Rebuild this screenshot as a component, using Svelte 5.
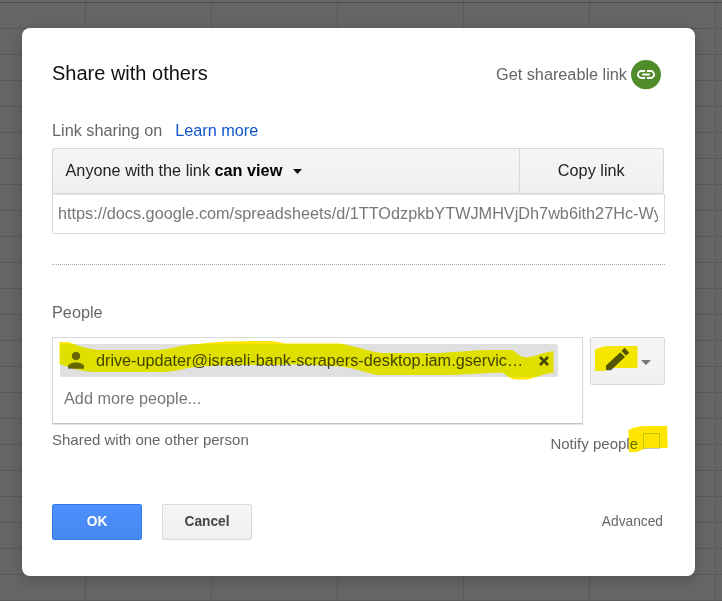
<script>
  let query = $state('');
  const url = 'https://docs.google.com/spreadsheets/d/1TTOdzpkbYTWJMHVjDh7wb6ith27Hc-Wy';
</script>

<main class="sheet">
  <section class="dialog">
    <header>
      <h1>Share with others</h1>
      <div class="getlink">
        <span>Get shareable link</span>
        <svg width="30" height="30" viewBox="0 0 30 30">
          <ellipse cx="15" cy="14.6" rx="15" ry="14.6" fill="#518c2b" />
          <path d="M14.100 11H10.400a3.500 3.500 0 0 0 0 7h3.700M15.900 11h3.700a3.500 3.500 0 0 1 0 7h-3.700M11.200 14.500h7.600" fill="none" stroke="#fff" stroke-width="1.8" />
        </svg>
      </div>
    </header>

    <div class="status"><span>Link sharing on</span><a href="#learn">Learn more</a></div>

    <div class="linkbar">
      <div class="access">
        <span>Anyone with the link <b>can view</b></span>
        <svg width="9" height="5" viewBox="0 0 9 5"><path d="M0 0h9L4.5 5z" fill="#111" /></svg>
      </div>
      <div class="copy">Copy link</div>
    </div>
    <div class="url"><span>{url}</span></div>

    <hr />

    <h2>People</h2>
    <div class="people">
      <div class="box">
        <div class="chip">
          <svg class="person" width="16" height="17" viewBox="0 0 16 17">
            <circle cx="8" cy="4.1" r="4.1" fill="#666" />
            <path d="M0 16.7v-2.2c0-2.5 4.6-4 8-4s8 1.500 8 4v2.200z" fill="#666" />
          </svg>
          <span class="mail">drive-updater@israeli-bank-scrapers-desktop.iam.gservic…</span>
          <svg class="close" width="10" height="10" viewBox="0 0 10 10"><path d="M1 1l8 8M9 1l-8 8" stroke="#444" stroke-width="2.500" /></svg>
        </div>
        <input bind:value={query} placeholder="Add more people..." />
      </div>
      <div class="edit">
        <svg width="23" height="23" viewBox="0 0 23 23" fill="#555">
          <path d="M0 17.400V22.200h5L19 8.900 14.300 4.200zM15.400 3.100l4.700 4.700 2.300-2.200c.6-.6.6-1.300 0-1.900L19.500.4c-.6-.6-1.300-.6-1.900 0z" />
        </svg>
        <svg class="arrow" width="10" height="5" viewBox="0 0 10 5"><path d="M0 0h10L5 5z" fill="#777" /></svg>
      </div>
    </div>

    <div class="notes">
      <span class="shared">Shared with one other person</span>
      <label class="notify">Notify people<i></i></label>
    </div>

    <footer>
      <button class="ok">OK</button>
      <button class="cancel">Cancel</button>
      <span class="advanced">Advanced</span>
    </footer>
  </section>

  <svg class="marker" width="722" height="601" viewBox="0 0 722 601" fill="#ffe600">
    <path d="M59.500 342H68C76 344 83 349 100 350H158C174 349 177 345 198 344C220 341 245 341 270 341Q278 341 285 343.500H340C355 346 370 352 383 353H440C458 352 474 350 490 350H512C516 351 518 357 527 357.500C537 356 545 352 553.500 351V373C543 373 537 378 527 379.500H517C507 379 507 373 500 372.500C484 373 465 375 440 375H377C366 373 350 366 332 366C315 365 295 364 275 365C245 365 215 364 188 368C175 371 170 372 160 372H93C80 371 70 368 59.500 364z" />
    <path d="M595 349.500L603 346.500Q608 346 616 346H637.500V368H616C610 368 608 370 604 371H595z" />
    <path d="M628.300 430C634 427 640 426 646 426H667.300L667.700 448H648C641 449 640 451.500 636 452H629z" />
  </svg>
</main>

<style>
  :global(body) { margin: 0; }
  .sheet {
    position: relative;
    box-sizing: border-box;
    width: 722px;
    height: 601px;
    padding: 28px 27px 0 22px;
    overflow: hidden;
    font-family: "Liberation Sans", Arial, sans-serif;
    font-size: 16.25px;
    color: #666;
    background:
      linear-gradient(#4b4b4b, #4b4b4b) 0 2px / 100% 1px no-repeat,
      repeating-linear-gradient(90deg, #5a5a5a 0 1px, transparent 1px 126px) 85px 0 / 756px 100%,
      repeating-linear-gradient(#5a5a5a 0 1px, transparent 1px 26px) 0 2px / 100% 650px,
      #666;
  }
  .dialog {
    box-sizing: border-box;
    height: 548px;
    padding: 32px 30px 0;
    border-radius: 8px;
    background: #fff;
    box-shadow: 0 4px 16px rgba(0, 0, 0, .2);
  }
  header { display: flex; justify-content: space-between; height: 60px; }
  h1 { margin: 0; font-size: 20px; font-weight: 400; line-height: 26px; color: #111; }
  .getlink { display: flex; gap: 4px; margin-right: 4px; line-height: 29px; height: 30px; }
  .status { display: flex; gap: 13px; height: 28px; line-height: 21px; }
  .status a { color: #15c; text-decoration: none; }
  .linkbar {
    display: flex;
    box-sizing: border-box;
    width: 612px;
    height: 46px;
    border: 1px solid #d9d9d9;
    border-radius: 2px;
    line-height: 42px;
    color: #222;
    background: linear-gradient(#f5f5f5, #f0f0f0);
  }
  .access { display: flex; gap: 11px; width: 453px; padding-left: 12.5px; }
  .access b { color: #000; }
  .access svg { margin-top: 20px; }
  .copy { flex: 1; border-left: 1px solid #d9d9d9; text-align: center; }
  .url {
    box-sizing: border-box;
    height: 40px;
    padding: 0 6px 0 5px;
    border: 1px solid #d9d9d9;
    border-top-color: #e6e6e6;
    border-radius: 0 0 2px 2px;
    line-height: 36px;
    color: #777;
  }
  .url span { display: block; overflow: hidden; white-space: nowrap; }
  hr { height: 0; margin: 30px 0 0; border: 0; border-top: 1px dotted #aaa; }
  h2 { margin: 37px 0 0; height: 35px; font-size: 16.25px; font-weight: 400; line-height: 21px; }
  .people { display: flex; gap: 7px; height: 87px; }
  .box {
    box-sizing: border-box;
    width: 531px;
    padding: 6px 7px 0;
    border: 1px solid #d9d9d9;
    border-bottom-color: #c4c4c4;
    box-shadow: 0 1px 1px rgba(0, 0, 0, .1);
  }
  .chip {
    display: flex;
    align-items: center;
    box-sizing: border-box;
    width: 498px;
    height: 33px;
    padding: 0 9px 0 8px;
    border-radius: 2px;
    color: #444;
    background: #e0e0e0;
  }
  .person { margin-top: -1px; }
  .mail { margin-left: 12px; white-space: nowrap; letter-spacing: -0.02px; }
  .close { margin-left: auto; }
  input {
    display: block;
    width: 400px;
    height: 42px;
    padding: 0 0 0 4px;
    border: 0;
    outline: 0;
    font: inherit;
    background: transparent;
  }
  input::placeholder { color: #777; opacity: 1; }
  .edit {
    display: flex;
    box-sizing: border-box;
    width: 75px;
    height: 48px;
    padding: 10px 0 0 15px;
    gap: 12px;
    border: 1px solid #d9d9d9;
    border-radius: 2px;
    background: linear-gradient(#f5f5f5, #f0f0f0);
  }
  .arrow { margin-top: 12px; }
  .notes { display: flex; justify-content: space-between; height: 80px; font-size: 15px; }
  .shared { padding-top: 6px; line-height: 20px; }
  .notify { display: flex; gap: 5px; margin-right: 5px; padding-top: 9px; line-height: 21px; }
  .notify i { box-sizing: border-box; width: 17px; height: 16px; border: 1px solid #c6c6c6; }
  footer { display: flex; align-items: flex-start; font-size: 13.75px; }
  button {
    box-sizing: border-box;
    width: 90px;
    height: 36px;
    margin: 0 20px 0 0;
    padding: 0 0 2px;
    border: 1px solid #d9d9d9;
    border-radius: 2px;
    font: bold 13.75px "Liberation Sans", Arial, sans-serif;
    color: #444;
    background: linear-gradient(#f5f5f5, #f0f0f0);
  }
  .ok { border-color: #3079ed; color: #fff; background: linear-gradient(#4d90fe, #4787ed); }
  .advanced { margin: 0 2px 0 auto; line-height: 36px; }
  .marker { position: absolute; inset: 0; mix-blend-mode: darken; pointer-events: none; }
</style>
